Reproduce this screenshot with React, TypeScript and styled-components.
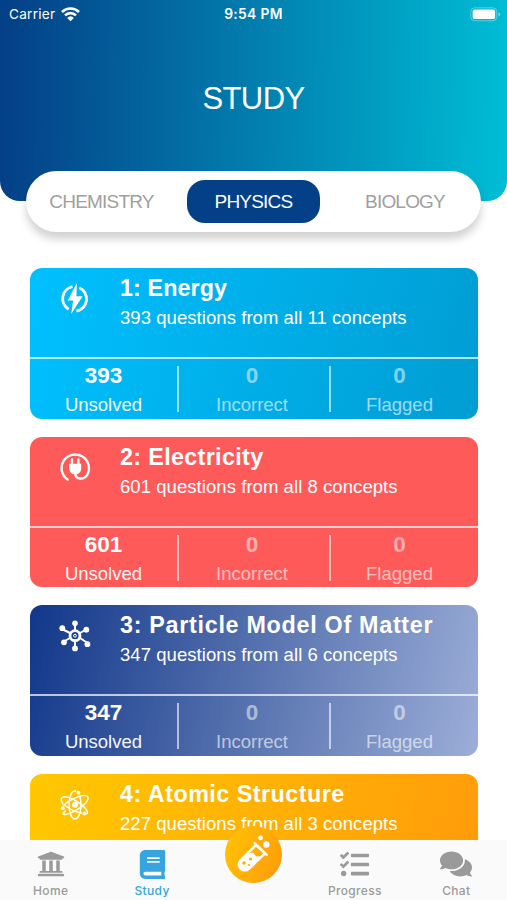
import React from 'react';
import styled, { createGlobalStyle } from 'styled-components';
import { FaUniversity, FaBook, FaTasks, FaComments } from 'react-icons/fa';

const GlobalStyle = createGlobalStyle`
  * { box-sizing: border-box; }
  body { margin: 0; background: #fff; font-family: 'Liberation Sans', Arial, sans-serif; }
`;

const Screen = styled.div`
  width: 507px;
  height: 900px;
  display: flex;
  flex-direction: column;
  overflow: hidden;
  background: #fff;
`;

const Header = styled.header`
  flex: none;
  height: 201px;
  border-radius: 0 0 20px 20px;
  color: #fff;
  background: linear-gradient(91deg, #044087 1%, #00bcd5 99%);
`;

const StatusBar = styled.div`
  height: 28px;
  display: grid;
  grid-template-columns: 1fr 1fr 1fr;
  align-items: center;
  padding: 0 6px 0 9px;
  font: 400 13.6px Inter, sans-serif;
`;

const Carrier = styled.div`
  display: flex;
  align-items: center;
  gap: 6px;
  letter-spacing: 0.25px;
`;

const Clock = styled.div`
  text-align: center;
  margin-left: -3px;
  font-weight: 600;
  font-size: 13.8px;
  letter-spacing: 0.35px;
`;

const Battery = styled.div`
  display: flex;
  justify-content: flex-end;
`;

const Title = styled.h1`
  margin: 0;
  padding-top: 53px;
  text-align: center;
  font-size: 31px;
  line-height: 36px;
  font-weight: 400;
  letter-spacing: -0.6px;
`;

const Segments = styled.nav`
  flex: none;
  width: 455px;
  height: 61px;
  margin: -30px 0 0 26px;
  padding: 0 10px 0 9px;
  display: grid;
  grid-template-columns: 133px 133px 1fr;
  column-gap: 19px;
  align-items: center;
  border-radius: 31px;
  background: #fff;
  box-shadow: 0 7px 8px rgba(0, 0, 0, 0.18);
  z-index: 1;
`;

const Segment = styled.button<{ $active?: boolean }>`
  height: 43px;
  padding: 0;
  border: 0;
  border-radius: 18px;
  font: 400 19px/44px 'Liberation Sans', Arial, sans-serif;
  letter-spacing: -0.8px;
  color: ${(p) => (p.$active ? '#fff' : '#a0a0a0')};
  background: ${(p) => (p.$active ? '#044087' : 'transparent')};
`;

const CardList = styled.main`
  flex: 1;
  min-height: 0;
  overflow: hidden;
  padding: 36.3px 29px 0 30px;
  display: flex;
  flex-direction: column;
  gap: 18.2px;
`;

const Card = styled.article<{ $fill: string }>`
  flex: none;
  height: 150.4px;
  border-radius: 12px;
  color: #fff;
  background: ${(p) => p.$fill};
`;

const CardTop = styled.div`
  height: 91px;
  display: flex;
  border-bottom: 2px solid rgba(255, 255, 255, 0.7);
`;

const IconSlot = styled.div`
  width: 90px;
  padding-top: 15px;
  display: flex;
  justify-content: center;
  svg { display: block; }
`;

const CardTitle = styled.h2<{ $spacing: number }>`
  margin: 0;
  padding-top: 6px;
  font-size: 23.3px;
  line-height: 28px;
  font-weight: 700;
  white-space: nowrap;
  letter-spacing: ${(p) => p.$spacing}px;
`;

const CardText = styled.p`
  margin: 6px 0 0;
  font-size: 18.5px;
  line-height: 20px;
  white-space: nowrap;
  letter-spacing: 0.06px;
`;

const Stats = styled.div`
  height: 59px;
  padding: 7px 0;
  display: grid;
  grid-template-columns: 149px 152px 137px;
`;

const Stat = styled.div<{ $divided?: boolean; $pull?: number }>`
  height: 46px;
  text-align: center;
  padding-right: ${(p) => p.$pull ?? 0}px;
  border-right: ${(p) => (p.$divided ? '2px solid rgba(255, 255, 255, 0.6)' : '0')};
`;

const StatValue = styled.div<{ $dim?: boolean }>`
  font-size: 22.5px;
  line-height: 22px;
  margin-top: -1px;
  font-weight: 700;
  opacity: ${(p) => (p.$dim ? 0.5 : 1)};
`;

const StatLabel = styled.div<{ $dim?: boolean }>`
  margin-top: 8px;
  font-size: 18.5px;
  line-height: 20px;
  opacity: ${(p) => (p.$dim ? 0.6 : 0.95)};
`;

const TabBar = styled.nav`
  flex: none;
  height: 60px;
  display: grid;
  grid-template-columns: repeat(5, 1fr);
  background: #fafafa;
`;

const Tab = styled.a<{ $active?: boolean }>`
  display: flex;
  flex-direction: column;
  align-items: center;
  color: ${(p) => (p.$active ? '#35a4df' : '#9a9a9a')};
  font: 500 12px/14px Inter, sans-serif;
  letter-spacing: 0.35px;
`;

const TabIcon = styled.div`
  height: 44px;
  padding-top: 4px;
  display: flex;
  align-items: center;
`;

const LabButton = styled.button`
  width: 57px;
  height: 57px;
  margin: -14.5px auto 0;
  padding: 0;
  border: 0;
  border-radius: 50%;
  background: linear-gradient(110deg, #ffc404, #ff9a0b);
  z-index: 2;
  svg { display: block; }
`;

const EnergyIcon = () => (
  <svg width="30" height="32" viewBox="0 0 30 32" fill="none">
    <path d="M12.5 3.7A12.2 12.2 0 0 0 8.7 26.2M19.3 4.8A12.2 12.2 0 0 1 16.4 28" stroke="#fff" strokeWidth="2.8" />
    <path d="M16.9 0 7.7 17.5h5.4L11.2 31 22.6 13.2h-6.2z" fill="#fff" />
  </svg>
);

const PlugIcon = () => (
  <svg width="32" height="32" viewBox="0 0 32 32" fill="none" stroke="#fff" strokeLinecap="round">
    <path d="M8.7 27.6A13.7 13.7 0 1 1 28.3 22.7C25.8 27.6 16.2 28.4 16.2 21" strokeWidth="2.4" />
    <path d="M13 7.5v5M19.4 7.5v5" strokeWidth="2.3" />
    <path d="M10.2 11.8h12v4.5c0 4-2.7 6-6 6s-6-2-6-6z" fill="#fff" stroke="none" />
  </svg>
);

const ParticleIcon = () => (
  <svg width="32" height="32" viewBox="0 0 32 32" fill="none" stroke="#fff">
    <path d="M16 10V4M16 22v6M11 13 3 9M21 13l7-4M11 18l-7 4M21 18l9 6" strokeWidth="2" />
    <circle cx="16" cy="15.7" r="5" strokeWidth="2.8" />
    <circle cx="16" cy="15.7" r="1.4" strokeWidth="1" />
    <g fill="#fff" stroke="none">
      <circle cx="16" cy="3.3" r="2.8" /><circle cx="16" cy="28.4" r="2.9" />
      <circle cx="3.3" cy="8.2" r="2.9" /><circle cx="27.3" cy="9.7" r="2.9" />
      <circle cx="5" cy="22.3" r="2.9" /><circle cx="28.4" cy="24.2" r="2.9" />
    </g>
  </svg>
);

const AtomIcon = () => (
  <svg width="32" height="32" viewBox="0 0 32 32" fill="none" stroke="#fff" strokeWidth="1.5">
    <path d="M17.1 2.7C13.2 0 10 7 10 15.5s2.7 14.3 6 14.3 6-5.8 6-14.3c0-2.8-.4-5.6-1.1-7.7" />
    <path d="M4.2 15.2C-.2 9.3 3.3 5.7 11.8 9.3c7.8 3.2 15.7 9.7 16.5 13.4.3 1.3-.2 2-1.2 2.3M22.8 24.3C17 23 9.7 19.3 6 16.5" />
    <path d="M6.8 21.6c-5.5 3.9-2 5.1 4.6 2.5 7.8-3.1 17.7-10.4 17.7-14.9 0-4.5-8.1-2.9-14.4.4C10 12 5.7 15 4.6 17" />
    <g fill="#fff" stroke="none">
      <circle cx="16" cy="15.8" r="3" /><circle cx="19.4" cy="3.7" r="1.9" />
      <circle cx="3.8" cy="19.2" r="1.9" /><circle cx="25.3" cy="24.6" r="2" />
    </g>
  </svg>
);

const TubeIcon = () => (
  <svg width="57" height="57" viewBox="0 0 57 57" fill="none">
    <path d="m29.7 17.2 12 11.6M31 19 15.5 34.5c-5.5 6 3 13.3 8.6 8L40 27.3z" stroke="#fff" strokeWidth="2.5" strokeLinecap="round" strokeLinejoin="round" />
    <path d="m23.5 27.5 5-1 2.3 3.7 5 .3L24 42c-5 4-12.5-2-8-7.5z" fill="#fff" />
    <g fill="#ffad08">
      <circle cx="19" cy="37" r="1.8" /><circle cx="25.5" cy="33" r="1.6" /><circle cx="24" cy="39" r="1.1" />
    </g>
    <g fill="#fff"><circle cx="35.5" cy="11.8" r="2.4" /><circle cx="41.3" cy="18.5" r="3.2" /></g>
  </svg>
);

const WifiIcon = () => (
  <svg width="19" height="15" viewBox="0 0 19 15" fill="none" stroke="#fff" strokeWidth="2.7">
    <path d="M1 4.9a12.3 12.3 0 0 1 17 0M4 8.4a7.9 7.9 0 0 1 11 0" />
    <path d="M9.5 14.2 6.2 10.9a4.8 4.8 0 0 1 6.6 0z" fill="#fff" stroke="none" />
  </svg>
);

const BatteryIcon = () => (
  <svg width="31" height="15" viewBox="0 0 31 15" fill="none">
    <rect x=".8" y=".8" width="26" height="13" rx="4" stroke="#fff" strokeOpacity=".35" />
    <rect x="2.6" y="2.5" width="22.5" height="9.6" rx="2.2" fill="#fff" />
    <path d="M28.5 5.3c2.3 1 2.3 3.2 0 4.2z" fill="#fff" fillOpacity=".45" />
  </svg>
);

const topics = [
  { title: '1: Energy', text: '393 questions from all 11 concepts', unsolved: 393, spacing: 0.1, fill: 'linear-gradient(105deg, #00c0ff, #009dd2)', Icon: EnergyIcon },
  { title: '2: Electricity', text: '601 questions from all 8 concepts', unsolved: 601, spacing: 0.35, fill: '#ff5a5a', Icon: PlugIcon },
  { title: '3: Particle Model Of Matter', text: '347 questions from all 6 concepts', unsolved: 347, spacing: 0.72, fill: 'linear-gradient(103deg, #12378a, #5470ad 48%, #9caed8)', Icon: ParticleIcon },
  { title: '4: Atomic Structure', text: '227 questions from all 3 concepts', spacing: 0.5, fill: 'linear-gradient(105deg, #ffc800, #ff9a0b)', Icon: AtomIcon },
];

export default function App() {
  return (
    <Screen>
      <GlobalStyle />
      <Header>
        <StatusBar>
          <Carrier>Carrier <WifiIcon /></Carrier>
          <Clock>9:54 PM</Clock>
          <Battery><BatteryIcon /></Battery>
        </StatusBar>
        <Title>STUDY</Title>
      </Header>
      <Segments>
        <Segment>CHEMISTRY</Segment>
        <Segment $active>PHYSICS</Segment>
        <Segment>BIOLOGY</Segment>
      </Segments>
      <CardList>
        {topics.map(({ title, text, unsolved, spacing, fill, Icon }) => (
          <Card key={title} $fill={fill}>
            <CardTop>
              <IconSlot><Icon /></IconSlot>
              <div>
                <CardTitle $spacing={spacing}>{title}</CardTitle>
                <CardText>{text}</CardText>
              </div>
            </CardTop>
            {unsolved !== undefined && (
              <Stats>
                <Stat $divided><StatValue>{unsolved}</StatValue><StatLabel>Unsolved</StatLabel></Stat>
                <Stat $divided $pull={4}><StatValue $dim>0</StatValue><StatLabel $dim>Incorrect</StatLabel></Stat>
                <Stat><StatValue $dim>0</StatValue><StatLabel $dim>Flagged</StatLabel></Stat>
              </Stats>
            )}
          </Card>
        ))}
      </CardList>
      <TabBar>
        <Tab><TabIcon><FaUniversity size={28} /></TabIcon>Home</Tab>
        <Tab $active><TabIcon><FaBook size={29} /></TabIcon>Study</Tab>
        <LabButton aria-label="Lab"><TubeIcon /></LabButton>
        <Tab><TabIcon><FaTasks size={29} /></TabIcon>Progress</Tab>
        <Tab><TabIcon><FaComments size={32} /></TabIcon>Chat</Tab>
      </TabBar>
    </Screen>
  );
}
